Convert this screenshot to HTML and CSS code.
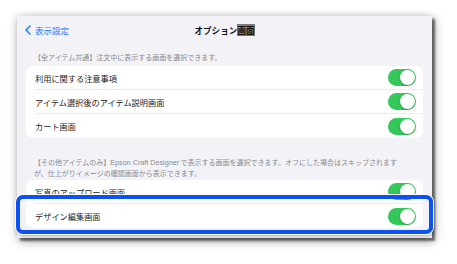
FILE: index.html
```html
<!DOCTYPE html>
<html lang="ja">
<head>
<meta charset="utf-8">
<link rel="stylesheet" href="styles.css">
</head>
<body>
<div class="stage">
  <div class="screen">
    <div class="nav">
      <div class="back">
        <svg class="chev" width="6" height="10" viewBox="0 0 6 10"><path d="M5 1 L1 5 L5 9" fill="none" stroke="#1a7cff" stroke-width="1.5" stroke-linecap="round" stroke-linejoin="round"/></svg>
        <span>表示設定</span>
      </div>
      <div class="title">オプション<span class="sel">画面</span></div>
      <div></div>
    </div>

    <div class="hdr">【全アイテム共通】注文中に表示する画面を選択できます。</div>
    <div class="card">
      <div class="row"><span>利用に関する注意事項</span><span class="toggle"></span></div>
      <div class="row"><span>アイテム選択後のアイテム説明画面</span><span class="toggle"></span></div>
      <div class="row"><span>カート画面</span><span class="toggle"></span></div>
    </div>

    <div class="hdr hdr2">【その他アイテムのみ】<span class="latin">Epson Craft Designer</span> で表示する画面を選択できます。オフにした場合はスキップされます<br>が、仕上がりイメージの確認画面から表示できます。</div>
    <div class="card">
      <div class="row"><span>写真のアップロード画面</span><span class="toggle"></span></div>
      <div class="row"><span>デザイン編集画面</span><span class="toggle"></span></div>
    </div>
  </div>
  <div class="highlight"></div>
</div>
</body>
</html>
```
FILE: styles.css
```css
html, body {
  margin: 0;
  padding: 0;
  background: #ffffff;
}
body {
  width: 457px;
  height: 264px;
  overflow: hidden;
  font-family: "Noto Sans CJK JP", "Noto Sans", sans-serif;
}
.stage {
  position: relative;
  width: 457px;
  height: 264px;
  padding-top: 16px;
  box-sizing: border-box;
}
.screen {
  margin-left: 17px;
  width: 415px;
  height: 222px;
  background: #f2f2f7;
  overflow: hidden;
  box-shadow: 3px 3px 2px rgba(0,0,0,0.5), 2px 3px 10px rgba(0,0,0,0.35), 0 0 6px rgba(0,0,0,0.12);
}
.nav {
  height: 28px;
  display: grid;
  grid-template-columns: 1fr auto 1fr;
  align-items: center;
  padding: 0 8px;
}
.back {
  display: flex;
  align-items: center;
  gap: 4px;
  color: #1a7cff;
  font-size: 8.5px;
  line-height: 10px;
}
.chev { display: block; }
.title {
  font-size: 8.6px;
  font-weight: 700;
  color: #111;
  line-height: 10px;
}
.sel {
  background: #7d7d7d;
}
.hdr {
  font-size: 7px;
  line-height: 10px;
  color: #8c8c90;
  margin: 8px 0 4px;
  padding-left: 17px;
  white-space: nowrap;
}
.hdr2 {
  line-height: 11px;
  margin: 19px 0 1px;
}
.latin {
  font-family: "Liberation Sans", "Noto Sans", sans-serif;
  font-size: 7.2px;
}
.card {
  margin: 0 9px;
  background: #fff;
  border-radius: 7px;
  overflow: hidden;
}
.row {
  height: 24px;
  margin-left: 9px;
  padding-right: 7px;
  display: flex;
  align-items: center;
  justify-content: space-between;
  font-size: 8.2px;
  color: #1c1c1e;
  box-sizing: border-box;
  border-bottom: 1px solid #ececf0;
}
.row:last-child { border-bottom: none; }
.toggle {
  position: relative;
  width: 28px;
  height: 17px;
  border-radius: 9px;
  background: #34c759;
  flex: none;
}
.toggle::after {
  content: "";
  position: absolute;
  right: 1px;
  top: 1px;
  width: 15px;
  height: 15px;
  border-radius: 50%;
  background: #fff;
  box-shadow: 0 1px 2px rgba(0,0,0,0.25);
}
.highlight {
  position: absolute;
  left: 16px;
  top: 195px;
  width: 417px;
  height: 39px;
  box-sizing: border-box;
  border: 4px solid #0a52f5;
  border-radius: 7px;
  box-shadow: 0 0 0 1px #fff, 1px 2px 4px rgba(0,0,0,0.3);
}
```
